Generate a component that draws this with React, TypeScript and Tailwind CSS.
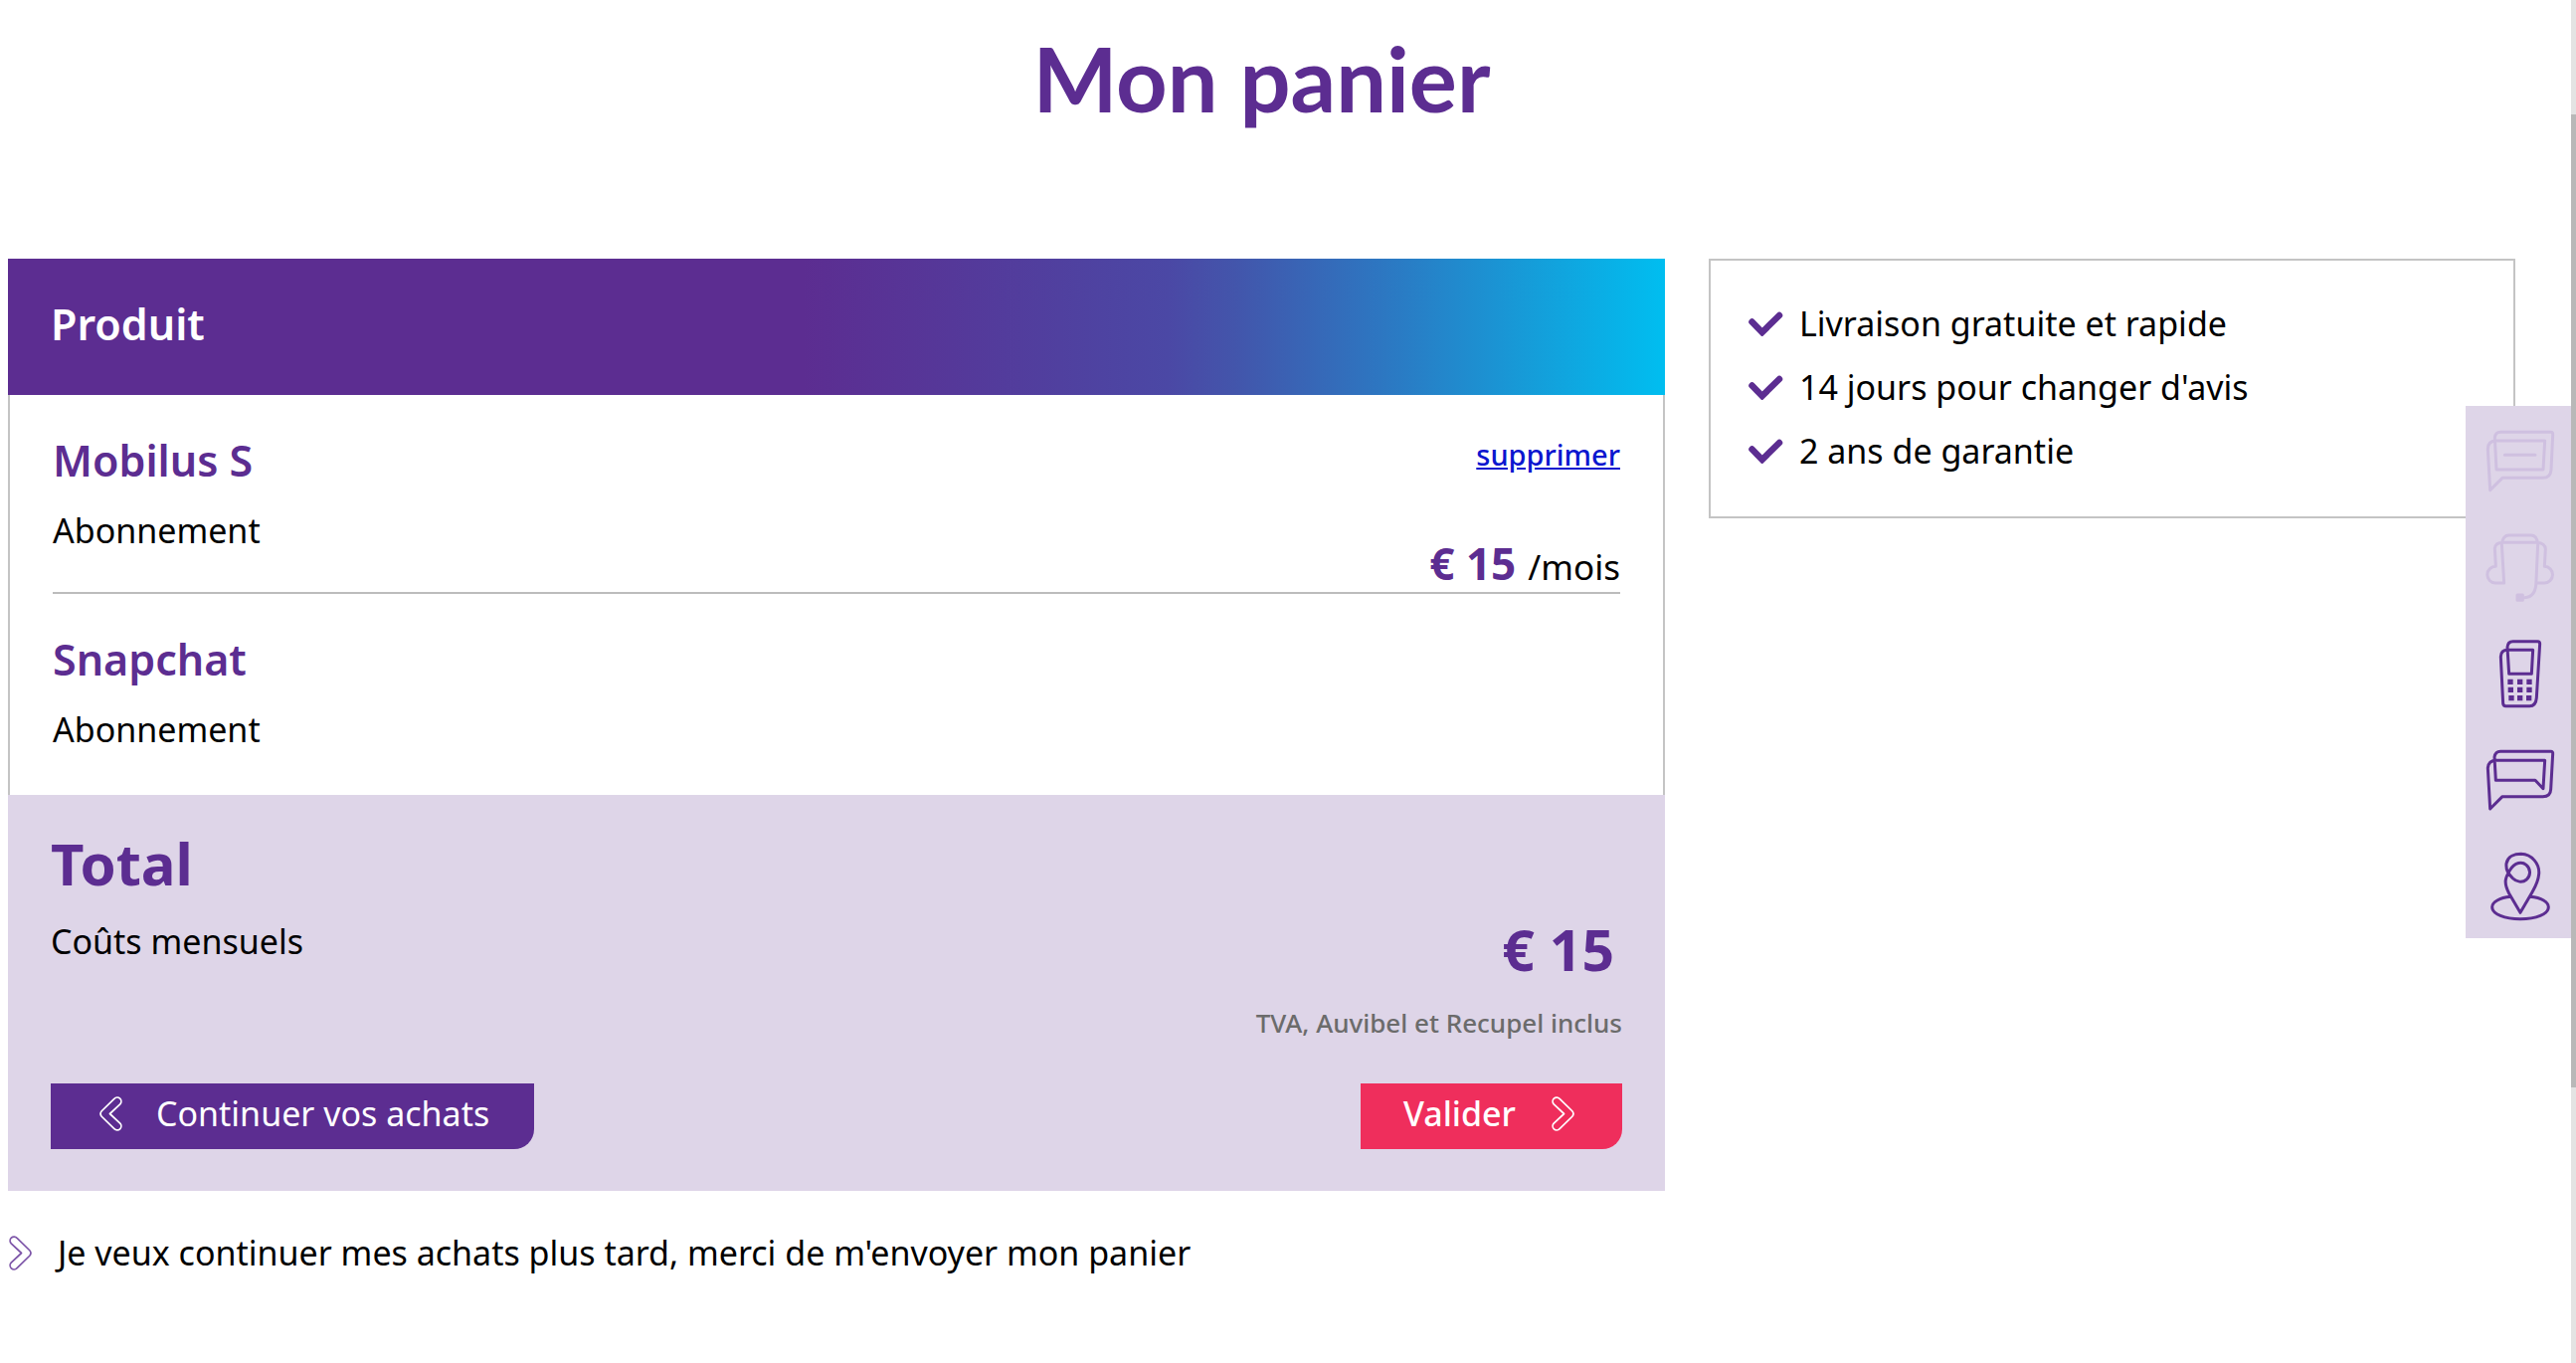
import type { ReactNode } from "react";

function Chevron({ flip = false, className = "" }: { flip?: boolean; className?: string }) {
  return (
    <svg
      viewBox="0 0 66 102"
      className={`h-[35px] w-[23px] shrink-0 ${flip ? "rotate-180" : ""} ${className}`}
      fill="none"
      stroke="currentColor"
      strokeWidth="5"
      strokeLinejoin="round"
      aria-hidden="true"
    >
      <path d="M23 7 L60 43 Q67 51 60 59 L23 95 A11.500 11.500 0 0 1 6 79 L36 51 L6 23 A11.500 11.500 0 0 1 23 7 Z" />
    </svg>
  );
}

function Check() {
  return (
    <svg
      viewBox="0 0 36 26"
      className="h-[26px] w-[36px] shrink-0"
      fill="none"
      stroke="#5c2d91"
      strokeWidth="6.500"
      strokeLinecap="round"
      aria-hidden="true"
    >
      <path d="M4.500 11.500 L14.700 22 L32 5" />
    </svg>
  );
}

function Item({ name, children }: { name: string; children?: ReactNode }) {
  return (
    <li className="flex justify-between border-b-2 border-[#bcbcbc] pt-9 last:border-b-0">
      <div className="pb-[38px]">
        <h2 className="text-[43px] leading-[60px] font-semibold text-[#5c2d91]">{name}</h2>
        <p className="mt-4 text-[34px] leading-[48px]">Abonnement</p>
      </div>
      {children}
    </li>
  );
}

function SideIcon({ label, box, faded = false, children }: { label: string; box: string; faded?: boolean; children: ReactNode }) {
  return (
    <button type="button" aria-label={label} className={`block cursor-pointer ${faded ? "text-[#cfc0e0]" : "text-[#5c2d91]"}`}>
      <svg
        viewBox={box}
        className="h-[107px] w-[106px]"
        fill="none"
        stroke="currentColor"
        strokeWidth="9"
        strokeLinecap="round"
        strokeLinejoin="round"
      >
        {children}
      </svg>
    </button>
  );
}

const perks = ["Livraison gratuite et rapide", "14 jours pour changer d'avis", "2 ans de garantie"];

export default function App() {
  return (
    <div className="flex min-h-screen bg-white font-['Noto_Sans',sans-serif] text-black">
      <main className="flex-1 pt-6 pr-14 pl-2">
        <h1 className="text-center font-['Lato',sans-serif] text-[90px] leading-[108px] font-bold text-[#5c2d91]">
          Mon panier
        </h1>

        <div className="mt-32 grid grid-cols-[1666fr_811fr] items-start gap-11">
          <section>
            <header className="bg-[linear-gradient(90deg,#5c2d91_0%,#5c2d91_48%,#4b48a5_70%,#4355ab_74%,#2a7bc4_84%,#159dd9_92%,#00bef0_100%)] px-[43px] pt-[36px] pb-[41px] text-[43px] leading-[60px] font-semibold text-white">
              Produit
            </header>
            <ul className="border-x-2 border-[#c4c4c4] px-[43px] pb-1">
              <Item name="Mobilus S">
                <div className="flex flex-col items-end justify-between pt-1">
                  <a href="#supprimer" className="text-[29px] leading-[40px] font-medium text-[#0b16cf] underline">
                    supprimer
                  </a>
                  <p className="text-[35px] leading-[50px]">
                    <strong className="mr-3 text-[44px] font-bold text-[#5c2d91]">€ 15</strong>
                    /mois
                  </p>
                </div>
              </Item>
              <Item name="Snapchat" />
            </ul>

            <div className="bg-[#ded5e8] px-[43px] pt-[29px] pb-[42px]">
              <h2 className="text-[58px] leading-[80px] font-bold text-[#5c2d91]">Total</h2>
              <div className="mt-2.5 flex justify-between">
                <p className="mt-1 text-[34px] leading-[48px]">Coûts mensuels</p>
                <div className="text-right">
                  <p className="mr-2 text-[57px] leading-[72px] font-bold text-[#5c2d91]">€ 15</p>
                  <p className="mt-5 text-[26px] leading-[36px] font-medium text-[#6b6b6b]">TVA, Auvibel et Recupel inclus</p>
                </div>
              </div>
              <div className="mt-[43px] flex justify-between text-[34px] leading-[60px] text-white">
                <button
                  type="button"
                  className="flex cursor-pointer items-center gap-[34px] rounded-br-[20px] bg-[#5c2d91] pr-[45px] pb-1.5 pl-[49px]"
                >
                  <Chevron flip />
                  Continuer vos achats
                </button>
                <button
                  type="button"
                  className="flex cursor-pointer items-center gap-[36px] rounded-br-[20px] bg-[#ef2e5c] pr-[48px] pb-1.5 pl-[43px] font-medium"
                >
                  Valider
                  <Chevron />
                </button>
              </div>
            </div>

            <a href="#envoyer" className="mt-[38px] inline-flex items-center gap-[26px] pl-px text-[34px] leading-[48px]">
              <Chevron className="text-[#7d55a8]" />
              Je veux continuer mes achats plus tard, merci de m'envoyer mon panier
            </a>
          </section>

          <ul className="border-2 border-[#c4c4c4] pt-[31px] pr-9 pb-[34px] pl-[37px]">
            {perks.map((perk) => (
              <li key={perk} className="flex items-center gap-4 text-[34px] leading-[64px]">
                <Check />
                {perk}
              </li>
            ))}
          </ul>
        </div>
      </main>

      <nav aria-label="Contact" className="fixed top-[408px] right-[5px] bg-[#ded5e8]">
        <SideIcon label="Chat" box="57 54 318 321" faded>
          <path d="M150 246 L145 150 Q147 133 162 133 H314 Q321 133 320 141 L315 246 Q314 271 290 271 H168 L131 308 L124 184 Q124 159 150 159 H296 L291 246 Z M175 202 H267" />
        </SideIcon>
        <SideIcon label="Assistance" box="57 375 318 321" faded>
          <path d="M173 588 L166 470 Q170 444 188 444 H254 Q272 444 275 470 L270 580 Q270 632 235 632 M173 588 H147 A25 25 0 0 1 148 538 L145 484 Q147 466 170 466 H272 Q297 468 298 486 L295 538 A25 25 0 0 1 294 588 H272" />
          <rect x="213" y="624" width="16" height="16" fill="currentColor" />
        </SideIcon>
        <SideIcon label="Téléphone" box="57 6 318 321">
          <path d="M188 172 L183 92 Q184 74 200 74 H274 Q281 74 281 81 L271 244 Q269 269 250 269 H178 Q171 269 170 262 L163 120 Q164 100 184 100 H260 L256 172 Z" />
          <path
            d="M184 188h16v16h-16zM213 188h16v16h-16zM241 188h16v16h-16zM185 212h16v16h-16zM213 212h16v16h-16zM241 212h16v16h-16zM187 237h16v16h-16zM213 237h16v16h-16zM240 237h16v16h-16z"
            fill="currentColor"
            stroke="none"
          />
        </SideIcon>
        <SideIcon label="Messages" box="57 327 318 321">
          <path d="M148 493 L144 423 Q147 406 162 406 H314 Q321 406 320 413 L314 520 Q313 542 290 542 H168 L131 579 L124 456 Q126 433 150 433 H296 L291 518 L267 493 Z" />
        </SideIcon>
        <SideIcon label="Points de vente" box="57 648 318 321">
          <path d="M222 892 L188 834 C170 800 178 785 190 765 C206 738 228 738 240 748 C256 762 252 782 241 792 C228 803 210 799 200 789 C186 774 178 765 180 744 C184 722 206 715 224 715 C258 716 281 746 278 776 C276 800 266 816 258 830 Z M192 844 C160 847 137 860 137 875 C137 896 175 911 222 911 C270 911 307 896 307 875 C307 860 286 847 252 844" />
        </SideIcon>
      </nav>

      <div className="flex w-[5px] flex-col bg-[#e3e3e3]" aria-hidden="true">
        <div className="grow-[115]" />
        <div className="grow-[978] bg-[#b8b8b8]" />
        <div className="grow-[277]" />
      </div>
    </div>
  );
}
